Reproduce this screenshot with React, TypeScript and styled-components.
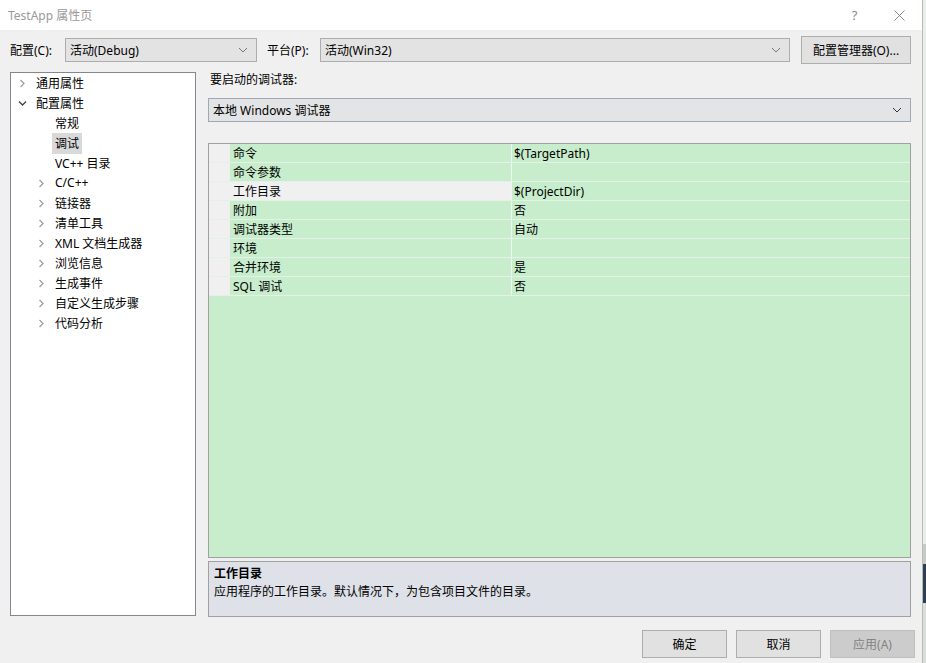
import React, { FC } from "react";
import styled, { createGlobalStyle, css } from "styled-components";

const GlobalStyle = createGlobalStyle`
    html, body {
        margin: 0;
        padding: 0;
        background: #f0f0f0;
    }
    #root {
        width: 926px;
        height: 663px;
        overflow: hidden;
    }
    * {
        box-sizing: border-box;
    }
`;

const font = `"Noto Sans", "Noto Sans CJK SC", sans-serif`;

const Screen = styled.div`
    display: flex;
    width: 926px;
    height: 663px;
    font-family: ${font};
    font-size: 12px;
    color: #000;
`;

const Dialog = styled.div`
    width: 922px;
    height: 663px;
    display: flex;
    flex-direction: column;
    background: #f0f0f0;
`;

const Behind = styled.div`
    flex: 1;
    border-left: 1px solid #a9c4a9;
    background: linear-gradient(#ececec 0 82%, #c8c8c8 82% 85%, #2f3d56 85% 91%, #dcdcdc 91%);
`;

const TitleBar = styled.div`
    height: 30px;
    background: #fff;
    display: flex;
    align-items: center;
    padding: 0 0 0 8px;
    color: #999;
    font-size: 12px;
`;

const Title = styled.span`
    flex: 1;
`;

const TitleButton = styled.span`
    width: 45px;
    display: flex;
    justify-content: center;
    color: #8a8a8a;
    font-size: 13px;
`;

const CloseIcon: FC = () => (
    <svg width="11" height="11" viewBox="0 0 11 11">
        <path d="M0.5 0.5 L10.5 10.5 M10.5 0.5 L0.5 10.5" stroke="#8a8a8a" strokeWidth="1" fill="none" />
    </svg>
);

const TopBar = styled.div`
    display: flex;
    align-items: center;
    height: 26px;
    margin-top: 7px;
    padding-left: 10px;
`;

const Label = styled.span<{ width: number; gapBefore?: number }>`
    width: ${({ width }) => width}px;
    margin-left: ${({ gapBefore }) => gapBefore ?? 0}px;
    flex-shrink: 0;
`;

type ComboProps = { width: number; tone?: "plain" | "blue" };

const Combo = styled.div<ComboProps>`
    width: ${({ width }) => width}px;
    height: 24px;
    display: flex;
    align-items: center;
    padding: 0 8px 0 4px;
    background: #e3e3e3;
    border: 1px solid #adadad;
    ${({ tone }) => tone === "blue" && css`
        background: #e3e4e6;
        border-color: #9ea9b5;
    `}
`;

const ComboText = styled.span`
    flex: 1;
`;

const Chevron: FC<{ color?: string }> = ({ color = "#555" }) => (
    <svg width="10" height="6" viewBox="0 0 10 6">
        <polyline points="1,1 5,5 9,1" fill="none" stroke={color} strokeWidth="1" />
    </svg>
);

const Arrow: FC<{ open?: boolean }> = ({ open }) => open ? (
    <svg width="9" height="9" viewBox="0 0 9 9">
        <polyline points="1,2.5 4.5,6 8,2.5" fill="none" stroke="#404040" strokeWidth="1.3" />
    </svg>
) : (
    <svg width="9" height="9" viewBox="0 0 9 9">
        <polyline points="2.5,1 6,4.5 2.5,8" fill="none" stroke="#a0a0a0" strokeWidth="1.3" />
    </svg>
);

const Button = styled.div<{ disabled?: boolean; width?: number; gapBefore?: number }>`
    width: ${({ width }) => width ?? 85}px;
    margin-left: ${({ gapBefore }) => gapBefore ?? 0}px;
    height: 28px;
    display: flex;
    align-items: center;
    justify-content: center;
    background: #e1e1e1;
    border: 1px solid #adadad;
    flex-shrink: 0;
    ${({ disabled }) => disabled && css`
        background: #cccccc;
        border-color: #bfbfbf;
        color: #838383;
    `}
`;

const Main = styled.div`
    display: flex;
    margin-top: 9px;
    padding-left: 10px;
    gap: 12px;
`;

const Tree = styled.div`
    width: 186px;
    height: 544px;
    background: #fff;
    border: 1px solid #828790;
`;

const TreeRow = styled.div<{ depth: number }>`
    height: 20px;
    display: flex;
    align-items: center;
    padding-left: ${({ depth }) => (depth === 0 ? 7 : 26)}px;
`;

const ArrowBox = styled.span`
    width: 18px;
    display: flex;
    align-items: center;
`;

const TreeText = styled.span<{ selected?: boolean }>`
    padding: 1px 3px 2px;
    margin-left: -3px;
    ${({ selected }) => selected && css`
        background: #d9d9d9;
    `}
`;

const Right = styled.div`
    width: 703px;
    display: flex;
    flex-direction: column;
`;

const SectionLabel = styled.div`
    height: 16px;
    margin-top: -2px;
    padding-left: 2px;
`;

const DebuggerRow = styled.div`
    margin-top: 12px;
`;

const Grid = styled.div`
    margin-top: 21px;
    height: 415px;
    border: 1px solid #a0a0a0;
    background: #c7edcc;
`;

const PropRow = styled.div`
    display: grid;
    grid-template-columns: 21px 281px 1fr;
    height: 19px;
    border-bottom: 1px solid #e4f1e6;
`;

const Gutter = styled.div`
    background: #f0f0f0;
`;

const NameCell = styled.div<{ selected?: boolean }>`
    padding: 2px 0 0 3px;
    line-height: 16px;
    ${({ selected }) => selected && css`
        background: #f0f0f0;
    `}
`;

const ValueCell = styled.div`
    padding: 2px 0 0 2px;
    line-height: 16px;
    border-left: 1px solid #eef5ef;
`;

const Description = styled.div`
    margin-top: 3px;
    height: 56px;
    border: 1px solid #a0a0a0;
    background: #dee1e8;
    padding: 3px 0 0 5px;
`;

const DescTitle = styled.div`
    font-weight: bold;
    line-height: 18px;
`;

const DescText = styled.div`
    line-height: 18px;
`;

const Footer = styled.div`
    display: flex;
    justify-content: flex-end;
    padding-right: 7px;
    margin-top: 13px;
`;

const treeItems = [
    { text: "通用属性", depth: 0, arrow: "closed" },
    { text: "配置属性", depth: 0, arrow: "open" },
    { text: "常规", depth: 1 },
    { text: "调试", depth: 1, selected: true },
    { text: "VC++ 目录", depth: 1 },
    { text: "C/C++", depth: 1, arrow: "closed" },
    { text: "链接器", depth: 1, arrow: "closed" },
    { text: "清单工具", depth: 1, arrow: "closed" },
    { text: "XML 文档生成器", depth: 1, arrow: "closed" },
    { text: "浏览信息", depth: 1, arrow: "closed" },
    { text: "生成事件", depth: 1, arrow: "closed" },
    { text: "自定义生成步骤", depth: 1, arrow: "closed" },
    { text: "代码分析", depth: 1, arrow: "closed" },
];

const props = [
    { name: "命令", value: "$(TargetPath)" },
    { name: "命令参数", value: "" },
    { name: "工作目录", value: "$(ProjectDir)", selected: true },
    { name: "附加", value: "否" },
    { name: "调试器类型", value: "自动" },
    { name: "环境", value: "" },
    { name: "合并环境", value: "是" },
    { name: "SQL 调试", value: "否" },
];

const App: FC = () => (
    <>
        <GlobalStyle />
        <Screen>
            <Dialog>
                <TitleBar>
                    <Title>TestApp 属性页</Title>
                    <TitleButton>?</TitleButton>
                    <TitleButton><CloseIcon /></TitleButton>
                </TitleBar>
                <TopBar>
                    <Label width={55}>配置(C):</Label>
                    <Combo width={192}>
                        <ComboText>活动(Debug)</ComboText>
                        <Chevron color="#777" />
                    </Combo>
                    <Label width={53} gapBefore={10}>平台(P):</Label>
                    <Combo width={470}>
                        <ComboText>活动(Win32)</ComboText>
                        <Chevron color="#777" />
                    </Combo>
                    <Button width={110} gapBefore={11}>配置管理器(O)...</Button>
                </TopBar>
                <Main>
                    <Tree>
                        {treeItems.map(item => (
                            <TreeRow key={item.text} depth={item.depth}>
                                <ArrowBox>
                                    {item.arrow && <Arrow open={item.arrow === "open"} />}
                                </ArrowBox>
                                <TreeText selected={item.selected}>{item.text}</TreeText>
                            </TreeRow>
                        ))}
                    </Tree>
                    <Right>
                        <SectionLabel>要启动的调试器:</SectionLabel>
                        <DebuggerRow>
                            <Combo width={703} tone="blue">
                                <ComboText>本地 Windows 调试器</ComboText>
                                <Chevron color="#333" />
                            </Combo>
                        </DebuggerRow>
                        <Grid>
                            {props.map(p => (
                                <PropRow key={p.name}>
                                    <Gutter />
                                    <NameCell selected={p.selected}>{p.name}</NameCell>
                                    <ValueCell>{p.value}</ValueCell>
                                </PropRow>
                            ))}
                        </Grid>
                        <Description>
                            <DescTitle>工作目录</DescTitle>
                            <DescText>应用程序的工作目录。默认情况下，为包含项目文件的目录。</DescText>
                        </Description>
                    </Right>
                </Main>
                <Footer>
                    <Button>确定</Button>
                    <Button gapBefore={9}>取消</Button>
                    <Button gapBefore={9} disabled>应用(A)</Button>
                </Footer>
            </Dialog>
            <Behind />
        </Screen>
    </>
);

export default App;
